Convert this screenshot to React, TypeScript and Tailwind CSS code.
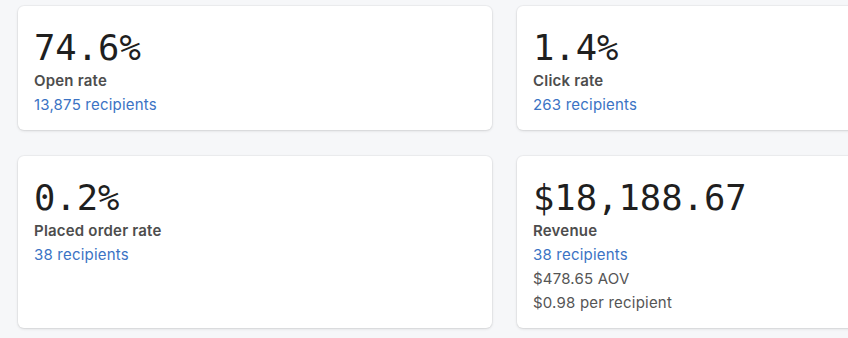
import React from "react";

type Stat = {
  value: string;
  label: string;
  recipients: string;
  extra?: string[];
};

const stats: Stat[] = [
  { value: "74.6%", label: "Open rate", recipients: "13,875 recipients" },
  { value: "1.4%", label: "Click rate", recipients: "263 recipients" },
  { value: "0.2%", label: "Placed order rate", recipients: "38 recipients" },
  {
    value: "$18,188.67",
    label: "Revenue",
    recipients: "38 recipients",
    extra: ["$478.65 AOV", "$0.98 per recipient"],
  },
];

const StatCard: React.FC<{ stat: Stat }> = ({ stat }) => (
  <div className="rounded-md bg-white px-4 pt-5 pb-[13px] font-['Inter',sans-serif] text-[15px] leading-6 tracking-[0.2px] shadow-[0_0_0_1px_rgba(0,0,0,0.03),0_1px_3px_rgba(0,0,0,0.12)]">
    <div className="font-['DejaVu_Sans_Mono',monospace] text-[35.5px] leading-[43px] tracking-normal text-[#1f1f1f]">
      {stat.value}
    </div>
    <div className="font-semibold text-[#4d4d4d]">{stat.label}</div>
    <a className="block text-[#3b73c4]">{stat.recipients}</a>
    {stat.extra?.map((line) => (
      <div key={line} className="text-[#555555]">
        {line}
      </div>
    ))}
  </div>
);

export default function App() {
  return (
    <div className="h-[338px] w-[848px] overflow-hidden bg-[#f6f7f9] pt-[6px] pl-[18px]">
      <div className="grid w-[973px] grid-cols-[474px_474px] gap-x-[25px] gap-y-[26px]">
        {stats.map((s) => (
          <StatCard key={s.label} stat={s} />
        ))}
      </div>
    </div>
  );
}
